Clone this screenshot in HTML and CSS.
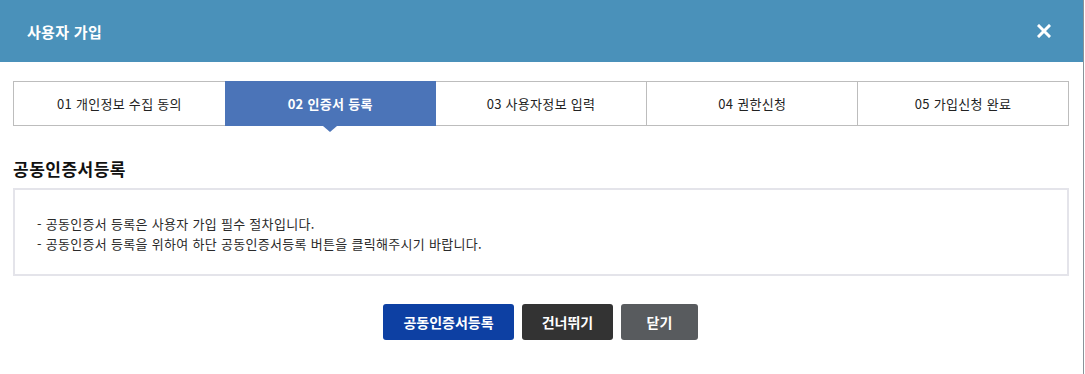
FILE: index.html
```html
<!DOCTYPE html>
<html lang="ko">
<head>
<meta charset="utf-8">
<title>사용자 가입</title>
<link rel="stylesheet" href="styles.css">
</head>
<body>
<div class="page">
  <div class="modal">
    <header class="modal-header">
      <h1 class="modal-title">사용자 가입</h1>
      <button class="close-btn" aria-label="닫기">
        <svg width="14" height="14" viewBox="0 0 14 14"><path d="M2 2 L12 12 M12 2 L2 12" stroke="#fff" stroke-width="3" stroke-linecap="square"/></svg>
      </button>
    </header>
    <div class="modal-body">
      <ol class="steps">
        <li class="step">01 개인정보 수집 동의</li>
        <li class="step active">02 인증서 등록</li>
        <li class="step">03 사용자정보 입력</li>
        <li class="step">04 권한신청</li>
        <li class="step">05 가입신청 완료</li>
      </ol>
      <h2 class="section-title">공동인증서등록</h2>
      <div class="notice">
        <p>- 공동인증서 등록은 사용자 가입 필수 절차입니다.</p>
        <p>- 공동인증서 등록을 위하여 하단 공동인증서등록 버튼을 클릭해주시기 바랍니다.</p>
      </div>
      <div class="actions">
        <button class="btn btn-primary">공동인증서등록</button>
        <button class="btn btn-dark">건너뛰기</button>
        <button class="btn btn-gray">닫기</button>
      </div>
    </div>
  </div>
  <div class="side"></div>
</div>
</body>
</html>
```
FILE: styles.css
```css
* { box-sizing: border-box; }
html, body { margin: 0; padding: 0; background: #fff; }
body { font-family: "Noto Sans CJK KR", "Noto Sans", sans-serif; color: #222; }
.page { display: flex; width: 1085px; height: 374px; overflow: hidden; }
.modal { width: 1083px; flex: none; background: #fff; }
.side { flex: 1; border-left: 1px solid #8a9299; background: #fff; }
.modal-header {
  height: 62px; background: #4a91ba;
  display: flex; align-items: center; justify-content: space-between;
  padding: 0 27px 0 27px;
}
.modal-title { margin: 0; font-size: 15px; font-weight: 700; color: #fff; letter-spacing: 0.3px; }
.close-btn { border: 0; background: transparent; padding: 0; width: 20px; height: 20px; display: flex; align-items: center; justify-content: center; cursor: pointer; margin-right: 2px; }
.modal-body { padding: 19px 14px 0 13px; }
.steps {
  list-style: none; margin: 0; padding: 0;
  display: grid; grid-template-columns: repeat(5, 1fr);
  border: 1px solid #bdbdbd; height: 45px;
}
.step {
  position: relative;
  display: flex; align-items: center; justify-content: center;
  font-size: 13px; color: #222; letter-spacing: 0.3px;
  border-left: 1px solid #bdbdbd;
}
.step:first-child { border-left: 0; }
.step.active { background: #4b74b8; color: #fff; font-weight: 700; margin: -1px 0; border-left: 0; }
.step.active + .step { border-left: 0; }
.step.active::after {
  content: ""; position: absolute; left: 50%; bottom: -6px; margin-left: -7px;
  border-left: 7px solid transparent; border-right: 7px solid transparent; border-top: 6px solid #4b74b8;
}
.section-title { margin: 31px 0 0 0; font-size: 17px; font-weight: 700; color: #111; letter-spacing: 0.5px; line-height: 24px; }
.notice {
  margin-top: 7px; border: 2px solid #e4e4ea; height: 88px;
  padding: 24px 22px 0 22px; font-size: 13px; color: #2a2a2a; letter-spacing: 0.3px;
}
.notice p { margin: 0; line-height: 20px; }
.actions { display: flex; justify-content: center; gap: 8px; margin-top: 28px; padding-right: 1px; }
.btn {
  height: 36px; border: 0; border-radius: 3px; color: #fff;
  font-family: inherit; font-size: 14px; font-weight: 700; padding: 0; letter-spacing: 0;
}
.btn-primary { background: #0d40a3; width: 131px; }
.btn-dark { background: #333333; width: 91px; }
.btn-gray { background: #585b5e; width: 77px; }
```
